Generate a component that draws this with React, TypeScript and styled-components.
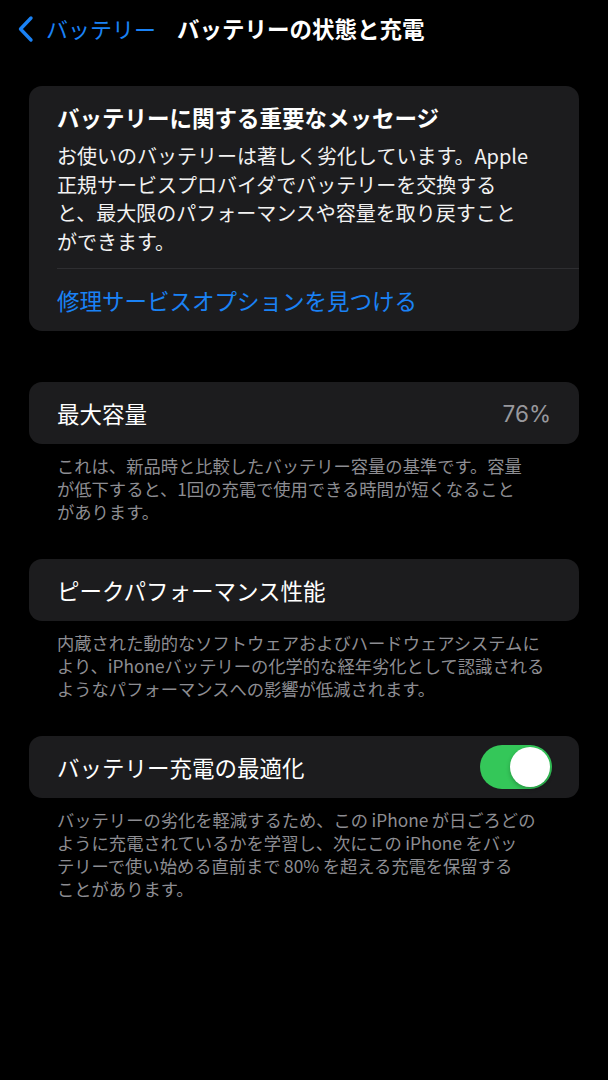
import React, { FC } from "react";
import styled, { createGlobalStyle } from "styled-components";

const GlobalStyle = createGlobalStyle`
  html, body {
    margin: 0;
    padding: 0;
    background: #000;
  }

  body {
    font-family: "Noto Sans CJK JP", "Noto Sans", "Liberation Sans", sans-serif;
    -webkit-font-smoothing: antialiased;
  }
`;

// thin spaces around latin words, like iOS does in Japanese text
const ts = "\u2009";

const descriptions = {
  capacity: [
    "これは、新品時と比較したバッテリー容量の基準です。容量",
    "が低下すると、1回の充電で使用できる時間が短くなること",
    "があります。",
  ],
  peak: [
    "内蔵された動的なソフトウェアおよびハードウェアシステムに",
    "より、iPhoneバッテリーの化学的な経年劣化として認識される",
    "ようなパフォーマンスへの影響が低減されます。",
  ],
  optimize: [
    `バッテリーの劣化を軽減するため、この${ts}iPhone${ts}が日ごろどの`,
    `ように充電されているかを学習し、次にこの${ts}iPhone${ts}をバッ`,
    `テリーで使い始める直前まで${ts}80%${ts}を超える充電を保留する`,
    "ことがあります。",
  ],
};

const messageLines = [
  "お使いのバッテリーは著しく劣化しています。Apple",
  "正規サービスプロバイダでバッテリーを交換する",
  "と、最大限のパフォーマンスや容量を取り戻すこと",
  "ができます。",
];

export default function App() {
  return (
    <>
      <GlobalStyle />
      <Screen>
        <NavBar>
          <BackButton>
            <svg width="20" height="28" viewBox="0 0 20 28" fill="none">
              <path
                d="M15 3 L4.5 14 L15 25"
                stroke="#1a82f5"
                strokeWidth="3.4"
                strokeLinecap="round"
                strokeLinejoin="round"
              />
            </svg>
            <span>バッテリー</span>
          </BackButton>
          <NavTitle>バッテリーの状態と充電</NavTitle>
        </NavBar>

        <Content>
          <Card>
            <MessageBody>
              <MessageTitle>バッテリーに関する重要なメッセージ</MessageTitle>
              <MessageText>
                {messageLines.map((line) => (
                  <Line key={line}>{line}</Line>
                ))}
              </MessageText>
            </MessageBody>
            <Separator />
            <Row>
              <LinkText>修理サービスオプションを見つける</LinkText>
            </Row>
          </Card>

          <Section $top={51}>
            <Card>
              <Row>
                <RowLabel>最大容量</RowLabel>
                <RowValue>76%</RowValue>
              </Row>
            </Card>
            <Footer lines={descriptions.capacity} />
          </Section>

          <Section $top={36}>
            <Card>
              <Row>
                <RowLabel>ピークパフォーマンス性能</RowLabel>
              </Row>
            </Card>
            <Footer lines={descriptions.peak} />
          </Section>

          <Section $top={36}>
            <Card>
              <Row>
                <RowLabel>バッテリー充電の最適化</RowLabel>
                <Toggle $on>
                  <Knob />
                </Toggle>
              </Row>
            </Card>
            <Footer lines={descriptions.optimize} />
          </Section>
        </Content>
      </Screen>
    </>
  );
}

const Footer: FC<{ lines: string[] }> = ({ lines }) => (
  <FooterText>
    {lines.map((line) => (
      <Line key={line}>{line}</Line>
    ))}
  </FooterText>
);

const Screen = styled.div`
  width: 608px;
  min-height: 1080px;
  background: #000;
  color: #fff;
`;

const NavBar = styled.div`
  display: flex;
  align-items: center;
  height: 56px;
  padding: 0 0 0 16px;
  box-sizing: border-box;
`;

const BackButton = styled.div`
  display: flex;
  align-items: center;
  gap: 10px;
  color: #1a82f5;
  font-size: 22px;

  svg {
    display: block;
    margin-top: 1px;
  }
`;

const NavTitle = styled.div`
  margin-left: 21px;
  font-size: 22.5px;
  font-weight: 700;
  color: #fff;
`;

const Content = styled.div`
  padding: 30px 29px 0 29px;
  display: flex;
  flex-direction: column;
`;

const Section = styled.div<{ $top: number }>`
  margin-top: ${(p) => p.$top}px;
  display: flex;
  flex-direction: column;
`;

const Card = styled.div`
  background: #1c1c1e;
  border-radius: 13px;
  overflow: hidden;
`;

const MessageBody = styled.div`
  padding: 16px 28px 0 28px;
`;

const MessageTitle = styled.div`
  font-size: 22.5px;
  line-height: 30px;
  font-weight: 700;
  color: #fff;
`;

const MessageText = styled.div`
  margin-top: 10px;
  font-size: 20px;
  line-height: 28.5px;
  color: #f2f2f2;
`;

const Line = styled.div`
  white-space: nowrap;
`;

const Separator = styled.div`
  height: 1px;
  background: #2e2e31;
  margin: 12px 0 0 28px;
`;

const Row = styled.div`
  height: 62px;
  display: flex;
  align-items: center;
  justify-content: space-between;
  padding: 0 28px;
`;

const RowLabel = styled.div`
  font-size: 22.5px;
  color: #fff;
`;

const RowValue = styled.div`
  font-family: "Inter", "Liberation Sans", sans-serif;
  font-size: 22.5px;
  color: #98989d;
`;

const LinkText = styled.div`
  font-size: 22.5px;
  color: #1a82f5;
`;

const Toggle = styled.div<{ $on?: boolean }>`
  width: 72px;
  height: 44px;
  border-radius: 22px;
  background: ${(p) => (p.$on ? "#34c759" : "#39393d")};
  display: flex;
  align-items: center;
  justify-content: ${(p) => (p.$on ? "flex-end" : "flex-start")};
  padding: 0 2px;
  box-sizing: border-box;
  margin-right: -1px;
`;

const Knob = styled.div`
  width: 40px;
  height: 40px;
  border-radius: 50%;
  background: #fff;
  box-shadow: 0 2px 4px rgba(0, 0, 0, 0.25);
`;

const FooterText = styled.div`
  padding: 10px 28px 0 28px;
  font-size: 17.3px;
  line-height: 23px;
  color: #8d8d92;
`;
